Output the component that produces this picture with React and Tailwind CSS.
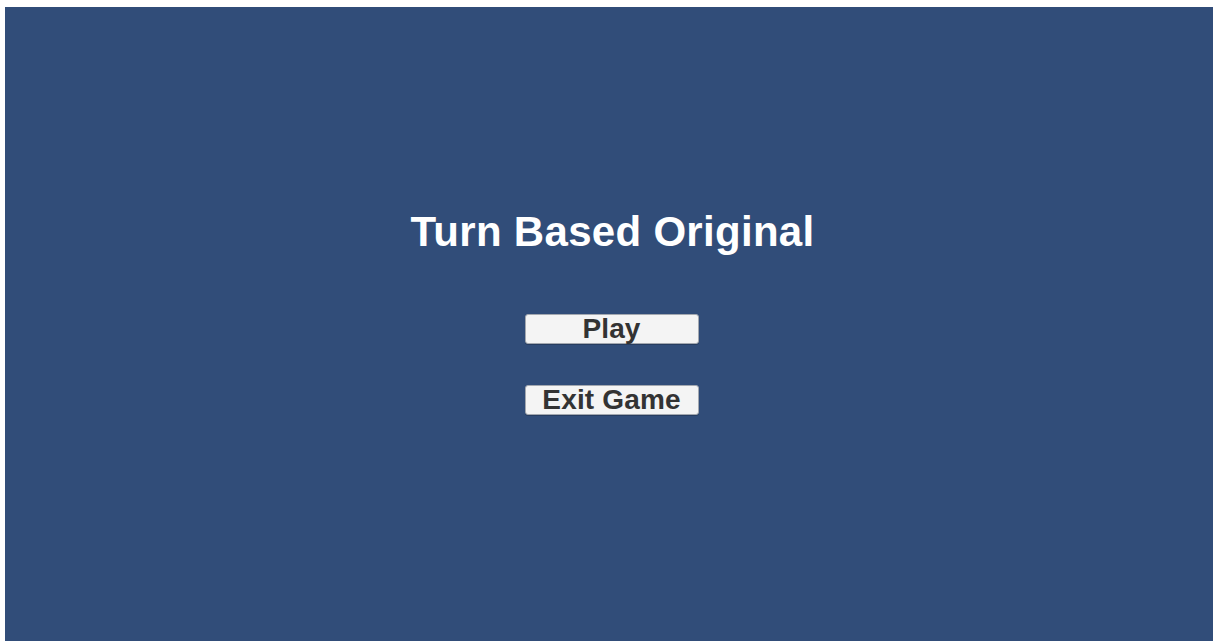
// Main menu screen
function MenuButton({ label }) {
    return (
        <button type="button"
            className="block w-[174px] h-[30px] rounded-[3px] border border-[#a3a8b0] bg-[#f4f4f4] text-[#333333] text-[28px] leading-[26px] font-bold tracking-[0.15px] text-center shadow-[0_1px_0_rgba(0,0,0,0.2)]">
            {label}
        </button>
    )
}

export default function App() {
    return (
        <div className="h-[641px] w-[1213px] bg-white pl-[5px] pt-[7px] flex font-['Liberation_Sans',Arial,sans-serif]">
            <div className="flex-1 bg-[#314d79] pl-[5px] flex flex-col items-center">
                <h1 className="mt-[204px] ml-[2px] text-white text-[42px] leading-none font-bold tracking-[0.3px]">
                    Turn Based Original
                </h1>
                <div className="mt-[61px] flex flex-col gap-[41px]">
                    <MenuButton label="Play" />
                    <MenuButton label="Exit Game" />
                </div>
            </div>
        </div>
    )
}
